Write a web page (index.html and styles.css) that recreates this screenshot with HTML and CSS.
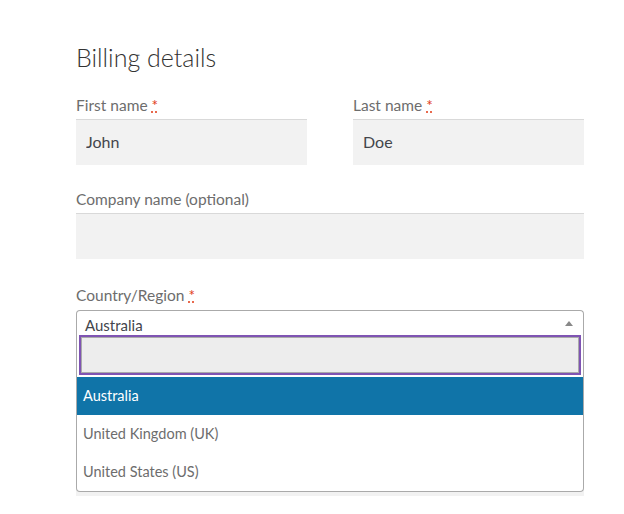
FILE: index.html
```html
<!DOCTYPE html>
<html lang="en">
<head>
    <meta charset="UTF-8">
    <meta name="viewport" content="width=device-width, initial-scale=1.0">
    <title>Checkout</title>
    <link rel="stylesheet" href="styles.css">
</head>
<body>

<div class="billing">
    <h3>Billing details</h3>

    <div class="row-half">
        <p class="field">
            <label for="first_name">First name <abbr class="required" title="required">*</abbr></label>
            <input type="text" id="first_name" class="input-text" value="John">
        </p>
        <p class="field">
            <label for="last_name">Last name <abbr class="required" title="required">*</abbr></label>
            <input type="text" id="last_name" class="input-text" value="Doe">
        </p>
    </div>

    <p class="field">
        <label for="company">Company name (optional)</label>
        <input type="text" id="company" class="input-text">
    </p>

    <div class="field country-field">
        <label>Country/Region <abbr class="required" title="required">*</abbr></label>
        <div class="select-wrap">
            <div class="selection">
                <span class="selection-text">Australia</span>
                <span class="arrow"></span>
            </div>

            <!-- open dropdown -->
            <div class="dropdown">
                <div class="search">
                    <input type="text" class="search-field">
                </div>
                <ul class="results">
                    <li class="highlighted">Australia</li>
                    <li>United Kingdom (UK)</li>
                    <li>United States (US)</li>
                </ul>
            </div>
        </div>
    </div>

    <div class="field">
        <label for="address_1">Street address <abbr class="required" title="required">*</abbr></label>
        <input type="text" id="address_1" class="input-text" placeholder="House number and street name">
        <input type="text" class="input-text second" placeholder="Apartment, suite, unit, etc. (optional)">
    </div>
</div>

</body>
</html>
```

FILE: styles.css
```css
body {
    font-family: 'Lato', 'Liberation Sans', sans-serif;
    background-color: #fff;
    margin: 0;
    padding: 0;
    color: #6d6d6d;
}

.billing {
    width: 508px;
    margin-left: 76px;
    padding-top: 41px;
}

h3 {
    font-size: 25px;
    font-weight: 300;
    color: #333;
    margin: 0 0 20px 0;
    line-height: 32px;
}

.row-half {
    display: flex;
    gap: 46px;
}

.row-half .field {
    flex: 1;
}

.field {
    margin: 0 0 22px 0;
}

.country-field {
    padding-top: 2px;
}

label {
    display: block;
    font-size: 15.5px;
    line-height: 24px;
    margin-bottom: 2px;
}

.required {
    color: #e2401c;
    text-decoration: underline dotted;
    border: none;
}

.input-text {
    display: block;
    width: 100%;
    height: 46px;
    box-sizing: border-box;
    padding: 0 10px 3px 10px;
    font-family: inherit;
    font-size: 16px;
    color: #43454b;
    background-color: #f2f2f2;
    border: none;
    border-top: 1px solid #d9d9d9;
    outline: none;
}

.input-text::placeholder {
    color: #999;
}

.input-text.second {
    margin-top: 18px;
}

/* select box */
.select-wrap {
    position: relative;
    margin-top: 3px;
}

.selection {
    height: 28px;
    box-sizing: border-box;
    border: 1px solid #aaa;
    border-bottom: none;
    border-radius: 4px 4px 0 0;
    padding: 0 8px;
    display: flex;
    align-items: center;
    justify-content: space-between;
    background-color: #fff;
}

.selection-text {
    font-size: 15px;
    color: #43454b;
    line-height: 28px;
}

.arrow {
    width: 0;
    height: 0;
    border-left: 4px solid transparent;
    border-right: 4px solid transparent;
    border-bottom: 5px solid #888;
    margin-right: 2px;
    margin-bottom: 2px;
}

.dropdown {
    position: absolute;
    top: 23px;
    left: 0;
    right: 0;
    z-index: 2;
    background-color: #fff;
    border: 1px solid #aaa;
    border-top: none;
    border-radius: 0 0 4px 4px;
}

.search {
    padding: 4px;
}

.search-field {
    display: block;
    width: 100%;
    height: 36px;
    box-sizing: border-box;
    border: 1px solid #aaa;
    background-color: #ededed;
    outline: 2px solid #7f54b3;
    margin: 0;
}

.results {
    list-style: none;
    margin: 0;
    padding: 0;
}

.results li {
    height: 38px;
    line-height: 38px;
    padding: 0 6px;
    font-size: 14.5px;
    color: #6d6d6d;
}

.results li.highlighted {
    background-color: #1074a8;
    color: #fff;
}
```
